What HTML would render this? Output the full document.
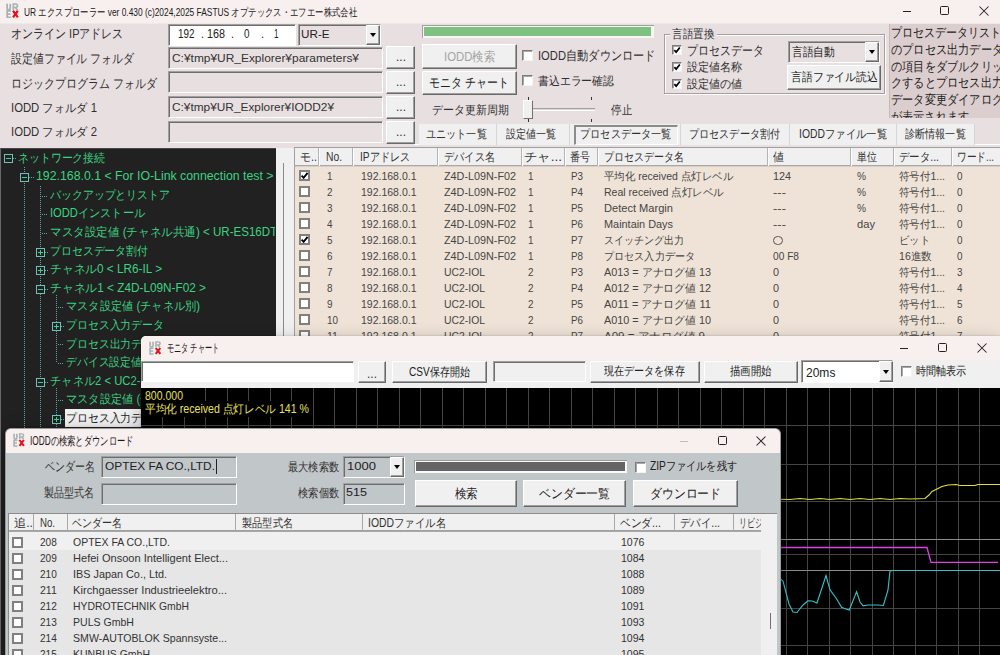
<!DOCTYPE html>
<html><head><meta charset="utf-8">
<style>
*{box-sizing:border-box;margin:0;padding:0}
html,body{width:1000px;height:655px;overflow:hidden}
body{position:relative;background:#e8dfe0;font-family:"Liberation Sans",sans-serif;font-size:12px;color:#303030}
.r{position:absolute}
.t{position:absolute;white-space:nowrap;transform-origin:0 50%}
.clip{position:absolute;overflow:hidden}
</style></head><body>

<div class="r" style="left:0px;top:0px;width:1000px;height:23px;background:#f8efef"></div>
<div class="r" style="left:0px;top:23px;width:1000px;height:1px;background:#f0e7e7"></div>
<svg class="r" style="left:6px;top:2.5px" width="12.5" height="15.5" viewBox="0 0 13 16" preserveAspectRatio="none">
<path d="M1.2 0.8V5.2Q1.2 7 2.8 7Q4.4 7 4.4 5.2V0.8" fill="none" stroke="#a6b2b3" stroke-width="1.8"></path>
<path d="M7.6 7.2V1H10Q12 1 12 2.9Q12 4.6 10 4.6H7.6M9.8 4.6L12 7.2" fill="none" stroke="#a6b2b3" stroke-width="1.7"></path>
<path d="M5 8.2H1.2V14.8H5M1.2 11.5H4.6" fill="none" stroke="#a6b2b3" stroke-width="1.8"></path>
<path d="M7.3 8L12.3 14.8M12.3 8L7.3 14.8" fill="none" stroke="#e8101a" stroke-width="2.3"></path>
</svg>
<div class="t" style="left: 24px; top: 4.5px; font-size: 11px; line-height: 14px; color: rgb(26, 26, 26); transform: scaleX(0.7609);">UR エクスプローラー ver 0.430 (c)2024,2025 FASTUS オプテックス・エフエー株式会社</div>
<div class="r" style="left:903px;top:11px;width:8px;height:1px;background:#222"></div>
<div class="r" style="left:940px;top:6px;width:9px;height:9px;border:1px solid #222;border-radius:1.5px"></div>
<svg class="r" style="left:979px;top:6px" width="10" height="10"><path d="M0.5 0.5L9.5 9.5M9.5 0.5L0.5 9.5" stroke="#222" stroke-width="1.05"></path></svg>
<div class="t" style="left: 10.5px; top: 25px; font-size: 13px; line-height: 17px; transform: scaleX(0.8465);">オンライン IPアドレス</div>
<div class="t" style="left: 10.5px; top: 49.5px; font-size: 13px; line-height: 17px; transform: scaleX(0.8389);">設定値ファイル フォルダ</div>
<div class="t" style="left: 10.5px; top: 74.5px; font-size: 13px; line-height: 17px; transform: scaleX(0.8458);">ロジックプログラム フォルダ</div>
<div class="t" style="left: 10.5px; top: 99.5px; font-size: 12px; line-height: 16px; transform: scaleX(0.9415);">IODD フォルダ 1</div>
<div class="t" style="left: 10.5px; top: 124px; font-size: 12px; line-height: 16px; transform: scaleX(0.9415);">IODD フォルダ 2</div>
<div class="r" style="left:168px;top:24px;width:128px;height:22px;background:#fff;border-top:1px solid #a0a0a0;border-left:1px solid #a0a0a0;border-bottom:1px solid #fff;border-right:1px solid #fff;box-shadow:inset 1px 1px 0 #6e6e6e"></div>
<div class="t" style="left: 177.5px; top: 26px; font-size: 12px; line-height: 16px; color: rgb(34, 34, 34); transform: scaleX(0.8237);">192</div>
<div class="t" style="left: 201px; top: 26px; font-size: 12px; line-height: 16px; color: rgb(34, 34, 34); transform: scaleX(0.8972);">.</div>
<div class="t" style="left: 207px; top: 26px; font-size: 12px; line-height: 16px; color: rgb(34, 34, 34); transform: scaleX(0.8986);">168</div>
<div class="t" style="left: 231px; top: 26px; font-size: 12px; line-height: 16px; color: rgb(34, 34, 34); transform: scaleX(0.8972);">.</div>
<div class="t" style="left: 243.5px; top: 26px; font-size: 12px; line-height: 16px; color: rgb(34, 34, 34); transform: scaleX(0.8224);">0</div>
<div class="t" style="left: 260.5px; top: 26px; font-size: 12px; line-height: 16px; color: rgb(34, 34, 34); transform: scaleX(0.8972);">.</div>
<div class="t" style="left: 274px; top: 26px; font-size: 12px; line-height: 16px; color: rgb(34, 34, 34); transform: scaleX(0.6729);">1</div>
<div class="r" style="left:298px;top:24px;width:83px;height:22px;background:#e8dfe0;border-top:1px solid #a0a0a0;border-left:1px solid #a0a0a0;border-bottom:1px solid #fff;border-right:1px solid #fff;box-shadow:inset 1px 1px 0 #6e6e6e"></div>
<div class="t" style="left: 300.5px; top: 27px; font-size: 11.5px; line-height: 15px; color: rgb(34, 34, 34); transform: scaleX(1.0169);">UR-E</div>
<div class="r" style="left:366px;top:25px;width:14px;height:20px;background:#f0f0f0;border-top:1px solid #fff;border-left:1px solid #fff;border-right:1px solid #696969;border-bottom:1px solid #696969;box-shadow:inset -1px -1px 0 #a0a0a0"></div>
<div class="r" style="left:369.5px;top:33.0px;width:0;height:0;border-left:3.5px solid transparent;border-right:3.5px solid transparent;border-top:4px solid #000"></div>
<div class="r" style="left:168px;top:47px;width:215px;height:22px;background:#e8dfe0;border-top:1px solid #a0a0a0;border-left:1px solid #a0a0a0;border-bottom:1px solid #fff;border-right:1px solid #fff;box-shadow:inset 1px 1px 0 #6e6e6e"></div>
<div class="t" style="left: 172px; top: 51px; font-size: 11px; line-height: 14px; color: rgb(51, 51, 51); transform: scaleX(1.0845);">C:¥tmp¥UR_Explorer¥parameters¥</div>
<div class="r" style="left:168px;top:71px;width:215px;height:22px;background:#e8dfe0;border-top:1px solid #a0a0a0;border-left:1px solid #a0a0a0;border-bottom:1px solid #fff;border-right:1px solid #fff;box-shadow:inset 1px 1px 0 #6e6e6e"></div>
<div class="r" style="left:168px;top:96px;width:215px;height:22px;background:#e8dfe0;border-top:1px solid #a0a0a0;border-left:1px solid #a0a0a0;border-bottom:1px solid #fff;border-right:1px solid #fff;box-shadow:inset 1px 1px 0 #6e6e6e"></div>
<div class="t" style="left: 172px; top: 100px; font-size: 11px; line-height: 14px; color: rgb(51, 51, 51); transform: scaleX(1.0772);">C:¥tmp¥UR_Explorer¥IODD2¥</div>
<div class="r" style="left:168px;top:121px;width:215px;height:22px;background:#e8dfe0;border-top:1px solid #a0a0a0;border-left:1px solid #a0a0a0;border-bottom:1px solid #fff;border-right:1px solid #fff;box-shadow:inset 1px 1px 0 #6e6e6e"></div>
<div class="r" style="left:386px;top:46px;width:29px;height:23px;background:#f0f0f0;border-top:1px solid #fff;border-left:1px solid #fff;border-right:1px solid #696969;border-bottom:1px solid #696969;box-shadow:inset -1px -1px 0 #a0a0a0"></div>
<div class="t" style="left: 395.5px; top: 49px; font-size: 12px; line-height: 16px; color: rgb(51, 51, 51); transform: scaleX(0.9984);">...</div>
<div class="r" style="left:386px;top:71px;width:29px;height:23px;background:#f0f0f0;border-top:1px solid #fff;border-left:1px solid #fff;border-right:1px solid #696969;border-bottom:1px solid #696969;box-shadow:inset -1px -1px 0 #a0a0a0"></div>
<div class="t" style="left: 395.5px; top: 74px; font-size: 12px; line-height: 16px; color: rgb(51, 51, 51); transform: scaleX(0.9984);">...</div>
<div class="r" style="left:386px;top:96px;width:29px;height:23px;background:#f0f0f0;border-top:1px solid #fff;border-left:1px solid #fff;border-right:1px solid #696969;border-bottom:1px solid #696969;box-shadow:inset -1px -1px 0 #a0a0a0"></div>
<div class="t" style="left: 395.5px; top: 99px; font-size: 12px; line-height: 16px; color: rgb(51, 51, 51); transform: scaleX(0.9984);">...</div>
<div class="r" style="left:386px;top:121px;width:29px;height:23px;background:#f0f0f0;border-top:1px solid #fff;border-left:1px solid #fff;border-right:1px solid #696969;border-bottom:1px solid #696969;box-shadow:inset -1px -1px 0 #a0a0a0"></div>
<div class="t" style="left: 395.5px; top: 124px; font-size: 12px; line-height: 16px; color: rgb(51, 51, 51); transform: scaleX(0.9984);">...</div>
<div class="r" style="left:422px;top:25px;width:232px;height:13px;background:#faf6f6;border-top:1px solid #a0a0a0;border-left:1px solid #a0a0a0"></div>
<div class="r" style="left:424px;top:27px;width:227px;height:9px;background:#7ec282"></div>
<div class="r" style="left:422px;top:44px;width:95px;height:25px;background:#f0f0f0;border-top:1px solid #fff;border-left:1px solid #fff;border-right:1px solid #696969;border-bottom:1px solid #696969;box-shadow:inset -1px -1px 0 #a0a0a0"></div>
<div class="t" style="left: 443.5px; top: 47.5px; font-size: 13px; line-height: 17px; color: rgb(164, 164, 164); transform: scaleX(0.8718);">IODD検索</div>
<div class="r" style="left:422px;top:71px;width:95px;height:24px;background:#f0f0f0;border-top:1px solid #fff;border-left:1px solid #fff;border-right:1px solid #696969;border-bottom:1px solid #696969;box-shadow:inset -1px -1px 0 #a0a0a0"></div>
<div class="t" style="left: 429px; top: 73.5px; font-size: 13px; line-height: 17px; color: rgb(34, 34, 34); transform: scaleX(0.8423);">モニタ チャート</div>
<div class="r" style="left:522px;top:50px;width:11px;height:11px;background:#fff;border-top:1px solid #7c7c7c;border-left:1px solid #7c7c7c;border-bottom:1px solid #f4f4f4;border-right:1px solid #f4f4f4;box-shadow:inset 1px 1px 0 #a8a8a8"></div>
<div class="t" style="left: 537.5px; top: 47.1px; font-size: 13px; line-height: 17px; transform: scaleX(0.8608);">IODD自動ダウンロード</div>
<div class="r" style="left:522px;top:75px;width:11px;height:11px;background:#fff;border-top:1px solid #7c7c7c;border-left:1px solid #7c7c7c;border-bottom:1px solid #f4f4f4;border-right:1px solid #f4f4f4;box-shadow:inset 1px 1px 0 #a8a8a8"></div>
<div class="t" style="left: 537.5px; top: 72.5px; font-size: 12px; line-height: 16px; transform: scaleX(0.9048);">書込エラー確認</div>
<div class="t" style="left: 432px; top: 101.6px; font-size: 12px; line-height: 16px; transform: scaleX(0.9131);">データ更新周期</div>
<div class="t" style="left: 611px; top: 101.6px; font-size: 12px; line-height: 16px; transform: scaleX(0.875);">停止</div>
<div class="r" style="left:532px;top:108px;width:63px;height:3px;border-top:1px solid #a0a0a0;border-bottom:1px solid #fff;background:#e0d8d8"></div>
<div class="r" style="left:523px;top:100px;width:10px;height:19px;background:#f0f0f0;border-top:1px solid #fff;border-left:1px solid #fff;border-right:1px solid #707070;border-bottom:1px solid #707070"></div>
<div class="r" style="left:528px;top:97px;width:1px;height:3px;background:#333"></div>
<div class="r" style="left:528px;top:119px;width:1px;height:3px;background:#333"></div>
<div class="r" style="left:591px;top:97px;width:1px;height:3px;background:#333"></div>
<div class="r" style="left:591px;top:119px;width:1px;height:3px;background:#333"></div>
<div class="r" style="left:664px;top:34px;width:221px;height:60px;border:1px solid #a89e9e;box-shadow:inset 1px 1px 0 #fff,1px 1px 0 #fff"></div>
<div class="r" style="left:670px;top:26px;width:47px;height:14px;background:#e8dfe0"></div>
<div class="t" style="left: 672px; top: 25.6px; font-size: 12px; line-height: 16px; transform: scaleX(0.8833);">言語置換</div>
<div class="r" style="left:672px;top:45px;width:10px;height:10px;background:#fff;border-top:1px solid #7c7c7c;border-left:1px solid #7c7c7c;border-bottom:1px solid #f4f4f4;border-right:1px solid #f4f4f4;box-shadow:inset 1px 1px 0 #a8a8a8"></div>
<svg class="r" style="left:672px;top:45px" width="10" height="10" viewBox="0 0 11 11"><path d="M2.6 5.6L4.6 7.8L8.6 2.8" fill="none" stroke="#000" stroke-width="1.9"></path></svg>
<div class="t" style="left: 687px; top: 41.5px; font-size: 13px; line-height: 17px; transform: scaleX(0.8407);">プロセスデータ</div>
<div class="r" style="left:672px;top:62px;width:10px;height:10px;background:#fff;border-top:1px solid #7c7c7c;border-left:1px solid #7c7c7c;border-bottom:1px solid #f4f4f4;border-right:1px solid #f4f4f4;box-shadow:inset 1px 1px 0 #a8a8a8"></div>
<svg class="r" style="left:672px;top:62px" width="10" height="10" viewBox="0 0 11 11"><path d="M2.6 5.6L4.6 7.8L8.6 2.8" fill="none" stroke="#000" stroke-width="1.9"></path></svg>
<div class="t" style="left: 687px; top: 59px; font-size: 12px; line-height: 16px; transform: scaleX(0.9267);">設定値名称</div>
<div class="r" style="left:672px;top:79px;width:10px;height:10px;background:#fff;border-top:1px solid #7c7c7c;border-left:1px solid #7c7c7c;border-bottom:1px solid #f4f4f4;border-right:1px solid #f4f4f4;box-shadow:inset 1px 1px 0 #a8a8a8"></div>
<svg class="r" style="left:672px;top:79px" width="10" height="10" viewBox="0 0 11 11"><path d="M2.6 5.6L4.6 7.8L8.6 2.8" fill="none" stroke="#000" stroke-width="1.9"></path></svg>
<div class="t" style="left: 687px; top: 75.6px; font-size: 12px; line-height: 16px; transform: scaleX(0.9267);">設定値の値</div>
<div class="r" style="left:788px;top:41px;width:92px;height:22px;background:#e8dfe0;border-top:1px solid #a0a0a0;border-left:1px solid #a0a0a0;border-bottom:1px solid #fff;border-right:1px solid #fff;box-shadow:inset 1px 1px 0 #6e6e6e"></div>
<div class="t" style="left: 792px; top: 44.3px; font-size: 12px; line-height: 16px; color: rgb(34, 34, 34); transform: scaleX(0.8958);">言語自動</div>
<div class="r" style="left:865px;top:42px;width:14px;height:20px;background:#f0f0f0;border-top:1px solid #fff;border-left:1px solid #fff;border-right:1px solid #696969;border-bottom:1px solid #696969;box-shadow:inset -1px -1px 0 #a0a0a0"></div>
<div class="r" style="left:868.5px;top:50.0px;width:0;height:0;border-left:3.5px solid transparent;border-right:3.5px solid transparent;border-top:4px solid #000"></div>
<div class="r" style="left:787px;top:65px;width:94px;height:25px;background:#f0f0f0;border-top:1px solid #fff;border-left:1px solid #fff;border-right:1px solid #696969;border-bottom:1px solid #696969;box-shadow:inset -1px -1px 0 #a0a0a0"></div>
<div class="t" style="left: 791px; top: 69px; font-size: 12px; line-height: 16px; color: rgb(34, 34, 34); transform: scaleX(0.9031);">言語ファイル読込</div>
<div class="clip" style="left:889px;top:24px;width:111px;height:94px;background:#dccece;border-left:1px solid #c8b8b8">
<div class="t" style="left: 1px; top: -0.3px; font-size: 13px; line-height: 17px; color: rgb(34, 34, 34); transform: scaleX(0.8462);">プロセスデータリスト</div>
<div class="t" style="left: 1px; top: 16.6px; font-size: 13px; line-height: 17px; color: rgb(34, 34, 34); transform: scaleX(0.8615);">のプロセス出力データ</div>
<div class="t" style="left: 1px; top: 33.5px; font-size: 13px; line-height: 17px; color: rgb(34, 34, 34); transform: scaleX(0.8615);">の項目をダブルクリッ</div>
<div class="t" style="left: 1px; top: 50.4px; font-size: 13px; line-height: 17px; color: rgb(34, 34, 34); transform: scaleX(0.8615);">クするとプロセス出力</div>
<div class="t" style="left: 1px; top: 67.3px; font-size: 13px; line-height: 17px; color: rgb(34, 34, 34); transform: scaleX(0.8615);">データ変更ダイアログ</div>
<div class="t" style="left: 1px; top: 84.2px; font-size: 13px; line-height: 17px; color: rgb(34, 34, 34); transform: scaleX(0.8571);">が表示されます</div>
</div>
<div class="r" style="left:414px;top:144px;width:586px;height:1px;background:#fff"></div>
<div class="r" style="left:419px;top:124px;width:555px;height:21px;background:#f0f0f0"></div>
<div class="r" style="left:496px;top:124px;width:1px;height:21px;background:#d6d6d6"></div>
<div class="r" style="left:569px;top:124px;width:1px;height:21px;background:#d6d6d6"></div>
<div class="r" style="left:680px;top:124px;width:1px;height:21px;background:#d6d6d6"></div>
<div class="r" style="left:789px;top:124px;width:1px;height:21px;background:#d6d6d6"></div>
<div class="r" style="left:896px;top:124px;width:1px;height:21px;background:#d6d6d6"></div>
<div class="r" style="left:974px;top:124px;width:1px;height:21px;background:#d6d6d6"></div>
<div class="r" style="left:574px;top:125px;width:104px;height:20px;border-top:2px solid #8c8c8c;border-left:2px solid #8c8c8c;border-bottom:1px solid #fff;border-right:1px solid #fff"></div>
<div class="t" style="left: 426.4px; top: 125.5px; font-size: 12px; line-height: 16px; transform: scaleX(0.8417);">ユニット一覧</div>
<div class="t" style="left: 505.7px; top: 125.5px; font-size: 12px; line-height: 16px; transform: scaleX(0.8417);">設定値一覧</div>
<div class="t" style="left: 580px; top: 125.5px; font-size: 12px; line-height: 16px; transform: scaleX(0.8481);">プロセスデータ一覧</div>
<div class="t" style="left: 689px; top: 125.5px; font-size: 12px; line-height: 16px; transform: scaleX(0.8426);">プロセスデータ割付</div>
<div class="t" style="left: 798.7px; top: 125.5px; font-size: 12px; line-height: 16px; transform: scaleX(0.8627);">IODDファイル一覧</div>
<div class="t" style="left: 905.3px; top: 125.5px; font-size: 12px; line-height: 16px; transform: scaleX(0.8431);">診断情報一覧</div>
<div class="r" style="left:0px;top:148px;width:276px;height:507px;background:#212121;border-top:1px solid #484848;border-left:1px solid #6a6a6a"></div>
<div class="r" style="left:276px;top:148px;width:18px;height:507px;background:#f0f0f0"></div>
<div class="r" style="left:283px;top:163px;width:1px;height:492px;background:#8a8a8a"></div>
<div class="r" style="left:24px;top:167px;width:1px;height:488px;background:repeating-linear-gradient(to bottom,#58a8a8 0 1px,transparent 1px 2px)"></div>
<div class="r" style="left:40px;top:186px;width:1px;height:469px;background:repeating-linear-gradient(to bottom,#58a8a8 0 1px,transparent 1px 2px)"></div>
<div class="r" style="left:56px;top:295px;width:1px;height:68px;background:repeating-linear-gradient(to bottom,#58a8a8 0 1px,transparent 1px 2px)"></div>
<div class="r" style="left:56px;top:388px;width:1px;height:267px;background:repeating-linear-gradient(to bottom,#58a8a8 0 1px,transparent 1px 2px)"></div>
<div class="clip" style="left:1px;top:148px;width:274px;height:507px">
<div class="r" style="left:3px;top:6px;width:9px;height:9px;border:1px solid #70c0c0;background:#212121"></div>
<div class="r" style="left:5px;top:10px;width:5px;height:1px;background:#3cd282"></div>
<div class="r" style="left:12px;top:10px;width:2.5px;height:1px;background:repeating-linear-gradient(to right,#58a8a8 0 1px,transparent 1px 2px)"></div>
<div class="t" style="left: 16.5px; top: 1.5px; font-size: 12px; line-height: 16px; color: rgb(60, 210, 130); transform: scaleX(0.9063);">ネットワーク接続</div>
<div class="r" style="left:19px;top:25px;width:9px;height:9px;border:1px solid #70c0c0;background:#212121"></div>
<div class="r" style="left:21px;top:29px;width:5px;height:1px;background:#3cd282"></div>
<div class="r" style="left:28px;top:29px;width:4.5px;height:1px;background:repeating-linear-gradient(to right,#58a8a8 0 1px,transparent 1px 2px)"></div>
<div class="t" style="left: 34.5px; top: 20.1px; font-size: 12px; line-height: 16px; color: rgb(60, 210, 130); transform: scaleX(1.026);">192.168.0.1 &lt; For IO-Link connection test &gt;</div>
<div class="r" style="left:41px;top:48px;width:6px;height:1px;background:repeating-linear-gradient(to right,#58a8a8 0 1px,transparent 1px 2px)"></div>
<div class="t" style="left: 49px; top: 38.7px; font-size: 12px; line-height: 16px; color: rgb(60, 210, 130); transform: scaleX(0.9091);">バックアップとリストア</div>
<div class="r" style="left:41px;top:66px;width:6px;height:1px;background:repeating-linear-gradient(to right,#58a8a8 0 1px,transparent 1px 2px)"></div>
<div class="t" style="left: 49px; top: 57.3px; font-size: 12px; line-height: 16px; color: rgb(60, 210, 130); transform: scaleX(0.9314);">IODDインストール</div>
<div class="r" style="left:41px;top:85px;width:6px;height:1px;background:repeating-linear-gradient(to right,#58a8a8 0 1px,transparent 1px 2px)"></div>
<div class="t" style="left: 49px; top: 75.9px; font-size: 12px; line-height: 16px; color: rgb(60, 210, 130); transform: scaleX(0.9641);">マスタ設定値 (チャネル共通) &lt; UR-ES16DT &gt;</div>
<div class="r" style="left:35px;top:100px;width:9px;height:9px;border:1px solid #70c0c0;background:#212121"></div>
<div class="r" style="left:37px;top:104px;width:5px;height:1px;background:#3cd282"></div>
<div class="r" style="left:39px;top:102px;width:1px;height:5px;background:#3cd282"></div>
<div class="r" style="left:44px;top:104px;width:3px;height:1px;background:repeating-linear-gradient(to right,#58a8a8 0 1px,transparent 1px 2px)"></div>
<div class="t" style="left: 49px; top: 94.5px; font-size: 12px; line-height: 16px; color: rgb(60, 210, 130); transform: scaleX(0.9074);">プロセスデータ割付</div>
<div class="r" style="left:35px;top:118px;width:9px;height:9px;border:1px solid #70c0c0;background:#212121"></div>
<div class="r" style="left:37px;top:122px;width:5px;height:1px;background:#3cd282"></div>
<div class="r" style="left:39px;top:120px;width:1px;height:5px;background:#3cd282"></div>
<div class="r" style="left:44px;top:122px;width:3px;height:1px;background:repeating-linear-gradient(to right,#58a8a8 0 1px,transparent 1px 2px)"></div>
<div class="t" style="left: 49px; top: 113.1px; font-size: 12px; line-height: 16px; color: rgb(60, 210, 130); transform: scaleX(0.9802);">チャネル0 &lt; LR6-IL &gt;</div>
<div class="r" style="left:35px;top:137px;width:9px;height:9px;border:1px solid #70c0c0;background:#212121"></div>
<div class="r" style="left:37px;top:141px;width:5px;height:1px;background:#3cd282"></div>
<div class="r" style="left:44px;top:141px;width:3px;height:1px;background:repeating-linear-gradient(to right,#58a8a8 0 1px,transparent 1px 2px)"></div>
<div class="t" style="left: 49px; top: 131.7px; font-size: 12px; line-height: 16px; color: rgb(60, 210, 130); transform: scaleX(0.9829);">チャネル1 &lt; Z4D-L09N-F02 &gt;</div>
<div class="r" style="left:57px;top:159px;width:6px;height:1px;background:repeating-linear-gradient(to right,#58a8a8 0 1px,transparent 1px 2px)"></div>
<div class="t" style="left: 65px; top: 150.3px; font-size: 12px; line-height: 16px; color: rgb(60, 210, 130); transform: scaleX(0.9349);">マスタ設定値 (チャネル別)</div>
<div class="r" style="left:51px;top:174px;width:9px;height:9px;border:1px solid #70c0c0;background:#212121"></div>
<div class="r" style="left:53px;top:178px;width:5px;height:1px;background:#3cd282"></div>
<div class="r" style="left:55px;top:176px;width:1px;height:5px;background:#3cd282"></div>
<div class="r" style="left:60px;top:178px;width:3px;height:1px;background:repeating-linear-gradient(to right,#58a8a8 0 1px,transparent 1px 2px)"></div>
<div class="t" style="left: 65px; top: 168.9px; font-size: 12px; line-height: 16px; color: rgb(60, 210, 130); transform: scaleX(0.9074);">プロセス入力データ</div>
<div class="r" style="left:57px;top:196px;width:6px;height:1px;background:repeating-linear-gradient(to right,#58a8a8 0 1px,transparent 1px 2px)"></div>
<div class="t" style="left: 65px; top: 187.5px; font-size: 12px; line-height: 16px; color: rgb(60, 210, 130); transform: scaleX(0.9074);">プロセス出力データ</div>
<div class="r" style="left:57px;top:215px;width:6px;height:1px;background:repeating-linear-gradient(to right,#58a8a8 0 1px,transparent 1px 2px)"></div>
<div class="t" style="left: 65px; top: 206.1px; font-size: 12px; line-height: 16px; color: rgb(60, 210, 130); transform: scaleX(0.9048);">デバイス設定値</div>
<div class="r" style="left:35px;top:230px;width:9px;height:9px;border:1px solid #70c0c0;background:#212121"></div>
<div class="r" style="left:37px;top:234px;width:5px;height:1px;background:#3cd282"></div>
<div class="r" style="left:44px;top:234px;width:3px;height:1px;background:repeating-linear-gradient(to right,#58a8a8 0 1px,transparent 1px 2px)"></div>
<div class="t" style="left: 49px; top: 224.7px; font-size: 12px; line-height: 16px; color: rgb(60, 210, 130); transform: scaleX(0.9395);">チャネル2 &lt; UC2-IOL &gt;</div>
<div class="r" style="left:57px;top:252px;width:6px;height:1px;background:repeating-linear-gradient(to right,#58a8a8 0 1px,transparent 1px 2px)"></div>
<div class="t" style="left: 65px; top: 243.3px; font-size: 12px; line-height: 16px; color: rgb(60, 210, 130); transform: scaleX(0.9349);">マスタ設定値 (チャネル別)</div>
<div class="r" style="left:51px;top:267px;width:9px;height:9px;border:1px solid #70c0c0;background:#212121"></div>
<div class="r" style="left:53px;top:271px;width:5px;height:1px;background:#3cd282"></div>
<div class="r" style="left:55px;top:269px;width:1px;height:5px;background:#3cd282"></div>
<div class="r" style="left:60px;top:271px;width:3px;height:1px;background:repeating-linear-gradient(to right,#58a8a8 0 1px,transparent 1px 2px)"></div>
<div class="r" style="left:64px;top:261.40000000000003px;width:80px;height:18px;background:#f0f0f0"></div>
<div class="t" style="left: 65px; top: 261.9px; font-size: 12px; line-height: 16px; color: rgb(34, 34, 34); transform: scaleX(0.9074);">プロセス入力データ</div>
<div class="r" style="left:57px;top:290px;width:6px;height:1px;background:repeating-linear-gradient(to right,#58a8a8 0 1px,transparent 1px 2px)"></div>
<div class="t" style="left: 65px; top: 280.5px; font-size: 12px; line-height: 16px; color: rgb(60, 210, 130); transform: scaleX(0.9074);">プロセス出力データ</div>
</div>
<div class="r" style="left:294px;top:147px;width:706px;height:189px;background:#efe3d7;border-top:1px solid #a0a0a0;border-left:1px solid #a0a0a0"></div>
<div class="r" style="left:295px;top:148px;width:705px;height:18px;background:#f0f0f0;border-bottom:1px solid #a8a8a8"></div>
<div class="r" style="left:295px;top:166px;width:705px;height:1px;background:#d8d0c8"></div>
<div class="r" style="left:318px;top:148px;width:1px;height:18px;background:#b4b4b4"></div>
<div class="r" style="left:319px;top:148px;width:1px;height:18px;background:#fff"></div>
<div class="r" style="left:352px;top:148px;width:1px;height:18px;background:#b4b4b4"></div>
<div class="r" style="left:353px;top:148px;width:1px;height:18px;background:#fff"></div>
<div class="r" style="left:437px;top:148px;width:1px;height:18px;background:#b4b4b4"></div>
<div class="r" style="left:438px;top:148px;width:1px;height:18px;background:#fff"></div>
<div class="r" style="left:521px;top:148px;width:1px;height:18px;background:#b4b4b4"></div>
<div class="r" style="left:522px;top:148px;width:1px;height:18px;background:#fff"></div>
<div class="r" style="left:564px;top:148px;width:1px;height:18px;background:#b4b4b4"></div>
<div class="r" style="left:565px;top:148px;width:1px;height:18px;background:#fff"></div>
<div class="r" style="left:597px;top:148px;width:1px;height:18px;background:#b4b4b4"></div>
<div class="r" style="left:598px;top:148px;width:1px;height:18px;background:#fff"></div>
<div class="r" style="left:767px;top:148px;width:1px;height:18px;background:#b4b4b4"></div>
<div class="r" style="left:768px;top:148px;width:1px;height:18px;background:#fff"></div>
<div class="r" style="left:850px;top:148px;width:1px;height:18px;background:#b4b4b4"></div>
<div class="r" style="left:851px;top:148px;width:1px;height:18px;background:#fff"></div>
<div class="r" style="left:893px;top:148px;width:1px;height:18px;background:#b4b4b4"></div>
<div class="r" style="left:894px;top:148px;width:1px;height:18px;background:#fff"></div>
<div class="r" style="left:951px;top:148px;width:1px;height:18px;background:#b4b4b4"></div>
<div class="r" style="left:952px;top:148px;width:1px;height:18px;background:#fff"></div>
<div class="t" style="left: 299.8px; top: 149px; font-size: 12px; line-height: 16px; color: rgb(51, 51, 51); transform: scaleX(0.9105);">モ..</div>
<div class="t" style="left: 326px; top: 149px; font-size: 12px; line-height: 16px; color: rgb(51, 51, 51); transform: scaleX(0.8562);">No.</div>
<div class="t" style="left: 360px; top: 149px; font-size: 12px; line-height: 16px; color: rgb(51, 51, 51); transform: scaleX(0.8425);">IPアドレス</div>
<div class="t" style="left: 443.8px; top: 149px; font-size: 12px; line-height: 16px; color: rgb(51, 51, 51); transform: scaleX(0.85);">デバイス名</div>
<div class="t" style="left: 524px; top: 149px; font-size: 12px; line-height: 16px; color: rgb(51, 51, 51); transform: scaleX(1.1171);">チャ...</div>
<div class="t" style="left: 569.8px; top: 149px; font-size: 12px; line-height: 16px; color: rgb(51, 51, 51); transform: scaleX(0.8333);">番号</div>
<div class="t" style="left: 604px; top: 149px; font-size: 12px; line-height: 16px; color: rgb(51, 51, 51); transform: scaleX(0.8333);">プロセスデータ名</div>
<div class="t" style="left: 773px; top: 149px; font-size: 12px; line-height: 16px; color: rgb(51, 51, 51); transform: scaleX(0.9167);">値</div>
<div class="t" style="left: 857px; top: 149px; font-size: 12px; line-height: 16px; color: rgb(51, 51, 51); transform: scaleX(0.8333);">単位</div>
<div class="t" style="left: 899px; top: 149px; font-size: 12px; line-height: 16px; color: rgb(51, 51, 51); transform: scaleX(0.8693);">データ...</div>
<div class="t" style="left: 957px; top: 149px; font-size: 12px; line-height: 16px; color: rgb(51, 51, 51); transform: scaleX(0.8041);">ワード...</div>
<div class="r" style="left:299px;top:170px;width:11px;height:11px;background:#fff;border:2px solid #808080"></div>
<svg class="r" style="left:299px;top:170px" width="11" height="11" viewBox="0 0 11 11"><path d="M2.6 5.6L4.6 7.8L8.6 2.8" fill="none" stroke="#000" stroke-width="1.9"></path></svg>
<div class="t" style="left: 327px; top: 169px; font-size: 11px; line-height: 14px; color: rgb(69, 69, 69); transform: scaleX(0.898);">1</div>
<div class="t" style="left: 360.5px; top: 169px; font-size: 11px; line-height: 14px; color: rgb(69, 69, 69); transform: scaleX(0.9548);">192.168.0.1</div>
<div class="t" style="left: 443.8px; top: 169px; font-size: 11px; line-height: 14px; color: rgb(69, 69, 69); transform: scaleX(0.9815);">Z4D-L09N-F02</div>
<div class="t" style="left: 528.4px; top: 169px; font-size: 11px; line-height: 14px; color: rgb(69, 69, 69); transform: scaleX(0.898);">1</div>
<div class="t" style="left: 570.5px; top: 169px; font-size: 11px; line-height: 14px; color: rgb(69, 69, 69); transform: scaleX(0.891);">P3</div>
<div class="t" style="left: 604px; top: 169px; font-size: 11px; line-height: 14px; color: rgb(69, 69, 69); transform: scaleX(0.9506);">平均化 received 点灯レベル</div>
<div class="t" style="left: 773px; top: 169px; font-size: 11px; line-height: 14px; color: rgb(69, 69, 69); transform: scaleX(0.9804);">124</div>
<div class="t" style="left: 857px; top: 169px; font-size: 11px; line-height: 14px; color: rgb(69, 69, 69); transform: scaleX(0.9201);">%</div>
<div class="t" style="left: 899px; top: 169px; font-size: 11px; line-height: 14px; color: rgb(69, 69, 69); transform: scaleX(0.9524);">符号付1...</div>
<div class="t" style="left: 957px; top: 169px; font-size: 11px; line-height: 14px; color: rgb(69, 69, 69); transform: scaleX(0.898);">0</div>
<div class="r" style="left:299px;top:186px;width:11px;height:11px;background:#fff;border:2px solid #808080"></div>
<div class="t" style="left: 327px; top: 185px; font-size: 11px; line-height: 14px; color: rgb(69, 69, 69); transform: scaleX(0.898);">2</div>
<div class="t" style="left: 360.5px; top: 185px; font-size: 11px; line-height: 14px; color: rgb(69, 69, 69); transform: scaleX(0.9548);">192.168.0.1</div>
<div class="t" style="left: 443.8px; top: 185px; font-size: 11px; line-height: 14px; color: rgb(69, 69, 69); transform: scaleX(0.9815);">Z4D-L09N-F02</div>
<div class="t" style="left: 528.4px; top: 185px; font-size: 11px; line-height: 14px; color: rgb(69, 69, 69); transform: scaleX(0.898);">1</div>
<div class="t" style="left: 570.5px; top: 185px; font-size: 11px; line-height: 14px; color: rgb(69, 69, 69); transform: scaleX(0.891);">P4</div>
<div class="t" style="left: 604px; top: 185px; font-size: 11px; line-height: 14px; color: rgb(69, 69, 69); transform: scaleX(0.9575);">Real received 点灯レベル</div>
<div class="t" style="left: 773px; top: 185px; font-size: 11px; line-height: 14px; color: rgb(69, 69, 69); transform: scaleX(1.1818);">---</div>
<div class="t" style="left: 857px; top: 185px; font-size: 11px; line-height: 14px; color: rgb(69, 69, 69); transform: scaleX(0.9201);">%</div>
<div class="t" style="left: 899px; top: 185px; font-size: 11px; line-height: 14px; color: rgb(69, 69, 69); transform: scaleX(0.9524);">符号付1...</div>
<div class="t" style="left: 957px; top: 185px; font-size: 11px; line-height: 14px; color: rgb(69, 69, 69); transform: scaleX(0.898);">0</div>
<div class="r" style="left:299px;top:202px;width:11px;height:11px;background:#fff;border:2px solid #808080"></div>
<div class="t" style="left: 327px; top: 201px; font-size: 11px; line-height: 14px; color: rgb(69, 69, 69); transform: scaleX(0.898);">3</div>
<div class="t" style="left: 360.5px; top: 201px; font-size: 11px; line-height: 14px; color: rgb(69, 69, 69); transform: scaleX(0.9548);">192.168.0.1</div>
<div class="t" style="left: 443.8px; top: 201px; font-size: 11px; line-height: 14px; color: rgb(69, 69, 69); transform: scaleX(0.9815);">Z4D-L09N-F02</div>
<div class="t" style="left: 528.4px; top: 201px; font-size: 11px; line-height: 14px; color: rgb(69, 69, 69); transform: scaleX(0.898);">1</div>
<div class="t" style="left: 570.5px; top: 201px; font-size: 11px; line-height: 14px; color: rgb(69, 69, 69); transform: scaleX(0.891);">P5</div>
<div class="t" style="left: 604px; top: 201px; font-size: 11px; line-height: 14px; color: rgb(69, 69, 69); transform: scaleX(1.0075);">Detect Margin</div>
<div class="t" style="left: 773px; top: 201px; font-size: 11px; line-height: 14px; color: rgb(69, 69, 69); transform: scaleX(1.1818);">---</div>
<div class="t" style="left: 857px; top: 201px; font-size: 11px; line-height: 14px; color: rgb(69, 69, 69); transform: scaleX(0.9201);">%</div>
<div class="t" style="left: 899px; top: 201px; font-size: 11px; line-height: 14px; color: rgb(69, 69, 69); transform: scaleX(0.9524);">符号付1...</div>
<div class="t" style="left: 957px; top: 201px; font-size: 11px; line-height: 14px; color: rgb(69, 69, 69); transform: scaleX(0.898);">0</div>
<div class="r" style="left:299px;top:218px;width:11px;height:11px;background:#fff;border:2px solid #808080"></div>
<div class="t" style="left: 327px; top: 217px; font-size: 11px; line-height: 14px; color: rgb(69, 69, 69); transform: scaleX(0.898);">4</div>
<div class="t" style="left: 360.5px; top: 217px; font-size: 11px; line-height: 14px; color: rgb(69, 69, 69); transform: scaleX(0.9548);">192.168.0.1</div>
<div class="t" style="left: 443.8px; top: 217px; font-size: 11px; line-height: 14px; color: rgb(69, 69, 69); transform: scaleX(0.9815);">Z4D-L09N-F02</div>
<div class="t" style="left: 528.4px; top: 217px; font-size: 11px; line-height: 14px; color: rgb(69, 69, 69); transform: scaleX(0.898);">1</div>
<div class="t" style="left: 570.5px; top: 217px; font-size: 11px; line-height: 14px; color: rgb(69, 69, 69); transform: scaleX(0.891);">P6</div>
<div class="t" style="left: 604px; top: 217px; font-size: 11px; line-height: 14px; color: rgb(69, 69, 69); transform: scaleX(0.9899);">Maintain Days</div>
<div class="t" style="left: 773px; top: 217px; font-size: 11px; line-height: 14px; color: rgb(69, 69, 69); transform: scaleX(1.1818);">---</div>
<div class="t" style="left: 857px; top: 217px; font-size: 11px; line-height: 14px; color: rgb(69, 69, 69); transform: scaleX(1.0141);">day</div>
<div class="t" style="left: 899px; top: 217px; font-size: 11px; line-height: 14px; color: rgb(69, 69, 69); transform: scaleX(0.9524);">符号付1...</div>
<div class="t" style="left: 957px; top: 217px; font-size: 11px; line-height: 14px; color: rgb(69, 69, 69); transform: scaleX(0.898);">0</div>
<div class="r" style="left:299px;top:234px;width:11px;height:11px;background:#fff;border:2px solid #808080"></div>
<svg class="r" style="left:299px;top:234px" width="11" height="11" viewBox="0 0 11 11"><path d="M2.6 5.6L4.6 7.8L8.6 2.8" fill="none" stroke="#000" stroke-width="1.9"></path></svg>
<div class="t" style="left: 327px; top: 233px; font-size: 11px; line-height: 14px; color: rgb(69, 69, 69); transform: scaleX(0.898);">5</div>
<div class="t" style="left: 360.5px; top: 233px; font-size: 11px; line-height: 14px; color: rgb(69, 69, 69); transform: scaleX(0.9548);">192.168.0.1</div>
<div class="t" style="left: 443.8px; top: 233px; font-size: 11px; line-height: 14px; color: rgb(69, 69, 69); transform: scaleX(0.9815);">Z4D-L09N-F02</div>
<div class="t" style="left: 528.4px; top: 233px; font-size: 11px; line-height: 14px; color: rgb(69, 69, 69); transform: scaleX(0.898);">1</div>
<div class="t" style="left: 570.5px; top: 233px; font-size: 11px; line-height: 14px; color: rgb(69, 69, 69); transform: scaleX(0.891);">P7</div>
<div class="t" style="left: 604px; top: 233px; font-size: 11px; line-height: 14px; color: rgb(69, 69, 69); transform: scaleX(0.9091);">スイッチング出力</div>
<div class="r" style="left:773px;top:235.5px;width:9.5px;height:9.5px;border:1.2px solid #555;border-radius:50%"></div>
<div class="t" style="left: 899px; top: 233px; font-size: 11px; line-height: 14px; color: rgb(69, 69, 69); transform: scaleX(0.9394);">ビット</div>
<div class="t" style="left: 957px; top: 233px; font-size: 11px; line-height: 14px; color: rgb(69, 69, 69); transform: scaleX(0.898);">0</div>
<div class="r" style="left:299px;top:250px;width:11px;height:11px;background:#fff;border:2px solid #808080"></div>
<div class="t" style="left: 327px; top: 249px; font-size: 11px; line-height: 14px; color: rgb(69, 69, 69); transform: scaleX(0.898);">6</div>
<div class="t" style="left: 360.5px; top: 249px; font-size: 11px; line-height: 14px; color: rgb(69, 69, 69); transform: scaleX(0.9548);">192.168.0.1</div>
<div class="t" style="left: 443.8px; top: 249px; font-size: 11px; line-height: 14px; color: rgb(69, 69, 69); transform: scaleX(0.9815);">Z4D-L09N-F02</div>
<div class="t" style="left: 528.4px; top: 249px; font-size: 11px; line-height: 14px; color: rgb(69, 69, 69); transform: scaleX(0.898);">1</div>
<div class="t" style="left: 570.5px; top: 249px; font-size: 11px; line-height: 14px; color: rgb(69, 69, 69); transform: scaleX(0.891);">P8</div>
<div class="t" style="left: 604px; top: 249px; font-size: 11px; line-height: 14px; color: rgb(69, 69, 69); transform: scaleX(0.9192);">プロセス入力データ</div>
<div class="t" style="left: 773px; top: 249px; font-size: 11px; line-height: 14px; color: rgb(69, 69, 69); transform: scaleX(0.9239);">00 F8</div>
<div class="t" style="left: 899px; top: 249px; font-size: 11px; line-height: 14px; color: rgb(69, 69, 69); transform: scaleX(0.9635);">16進数</div>
<div class="t" style="left: 957px; top: 249px; font-size: 11px; line-height: 14px; color: rgb(69, 69, 69); transform: scaleX(0.898);">0</div>
<div class="r" style="left:299px;top:266px;width:11px;height:11px;background:#fff;border:2px solid #808080"></div>
<div class="t" style="left: 327px; top: 265px; font-size: 11px; line-height: 14px; color: rgb(69, 69, 69); transform: scaleX(0.898);">7</div>
<div class="t" style="left: 360.5px; top: 265px; font-size: 11px; line-height: 14px; color: rgb(69, 69, 69); transform: scaleX(0.9548);">192.168.0.1</div>
<div class="t" style="left: 443.8px; top: 265px; font-size: 11px; line-height: 14px; color: rgb(69, 69, 69); transform: scaleX(0.9446);">UC2-IOL</div>
<div class="t" style="left: 528.4px; top: 265px; font-size: 11px; line-height: 14px; color: rgb(69, 69, 69); transform: scaleX(0.898);">2</div>
<div class="t" style="left: 570.5px; top: 265px; font-size: 11px; line-height: 14px; color: rgb(69, 69, 69); transform: scaleX(0.891);">P3</div>
<div class="t" style="left: 604px; top: 265px; font-size: 11px; line-height: 14px; color: rgb(69, 69, 69); transform: scaleX(0.9859);">A013 = アナログ値 13</div>
<div class="t" style="left: 773px; top: 265px; font-size: 11px; line-height: 14px; color: rgb(69, 69, 69); transform: scaleX(0.9796);">0</div>
<div class="t" style="left: 899px; top: 265px; font-size: 11px; line-height: 14px; color: rgb(69, 69, 69); transform: scaleX(0.9524);">符号付1...</div>
<div class="t" style="left: 957px; top: 265px; font-size: 11px; line-height: 14px; color: rgb(69, 69, 69); transform: scaleX(0.898);">3</div>
<div class="r" style="left:299px;top:282px;width:11px;height:11px;background:#fff;border:2px solid #808080"></div>
<div class="t" style="left: 327px; top: 281px; font-size: 11px; line-height: 14px; color: rgb(69, 69, 69); transform: scaleX(0.898);">8</div>
<div class="t" style="left: 360.5px; top: 281px; font-size: 11px; line-height: 14px; color: rgb(69, 69, 69); transform: scaleX(0.9548);">192.168.0.1</div>
<div class="t" style="left: 443.8px; top: 281px; font-size: 11px; line-height: 14px; color: rgb(69, 69, 69); transform: scaleX(0.9446);">UC2-IOL</div>
<div class="t" style="left: 528.4px; top: 281px; font-size: 11px; line-height: 14px; color: rgb(69, 69, 69); transform: scaleX(0.898);">2</div>
<div class="t" style="left: 570.5px; top: 281px; font-size: 11px; line-height: 14px; color: rgb(69, 69, 69); transform: scaleX(0.891);">P4</div>
<div class="t" style="left: 604px; top: 281px; font-size: 11px; line-height: 14px; color: rgb(69, 69, 69); transform: scaleX(0.9859);">A012 = アナログ値 12</div>
<div class="t" style="left: 773px; top: 281px; font-size: 11px; line-height: 14px; color: rgb(69, 69, 69); transform: scaleX(0.9796);">0</div>
<div class="t" style="left: 899px; top: 281px; font-size: 11px; line-height: 14px; color: rgb(69, 69, 69); transform: scaleX(0.9524);">符号付1...</div>
<div class="t" style="left: 957px; top: 281px; font-size: 11px; line-height: 14px; color: rgb(69, 69, 69); transform: scaleX(0.898);">4</div>
<div class="r" style="left:299px;top:298px;width:11px;height:11px;background:#fff;border:2px solid #808080"></div>
<div class="t" style="left: 327px; top: 297px; font-size: 11px; line-height: 14px; color: rgb(69, 69, 69); transform: scaleX(0.898);">9</div>
<div class="t" style="left: 360.5px; top: 297px; font-size: 11px; line-height: 14px; color: rgb(69, 69, 69); transform: scaleX(0.9548);">192.168.0.1</div>
<div class="t" style="left: 443.8px; top: 297px; font-size: 11px; line-height: 14px; color: rgb(69, 69, 69); transform: scaleX(0.9446);">UC2-IOL</div>
<div class="t" style="left: 528.4px; top: 297px; font-size: 11px; line-height: 14px; color: rgb(69, 69, 69); transform: scaleX(0.898);">2</div>
<div class="t" style="left: 570.5px; top: 297px; font-size: 11px; line-height: 14px; color: rgb(69, 69, 69); transform: scaleX(0.891);">P5</div>
<div class="t" style="left: 604px; top: 297px; font-size: 11px; line-height: 14px; color: rgb(69, 69, 69); transform: scaleX(1.001);">A011 = アナログ値 11</div>
<div class="t" style="left: 773px; top: 297px; font-size: 11px; line-height: 14px; color: rgb(69, 69, 69); transform: scaleX(0.9796);">0</div>
<div class="t" style="left: 899px; top: 297px; font-size: 11px; line-height: 14px; color: rgb(69, 69, 69); transform: scaleX(0.9524);">符号付1...</div>
<div class="t" style="left: 957px; top: 297px; font-size: 11px; line-height: 14px; color: rgb(69, 69, 69); transform: scaleX(0.898);">5</div>
<div class="r" style="left:299px;top:314px;width:11px;height:11px;background:#fff;border:2px solid #808080"></div>
<div class="t" style="left: 327px; top: 313px; font-size: 11px; line-height: 14px; color: rgb(69, 69, 69); transform: scaleX(0.898);">10</div>
<div class="t" style="left: 360.5px; top: 313px; font-size: 11px; line-height: 14px; color: rgb(69, 69, 69); transform: scaleX(0.9548);">192.168.0.1</div>
<div class="t" style="left: 443.8px; top: 313px; font-size: 11px; line-height: 14px; color: rgb(69, 69, 69); transform: scaleX(0.9446);">UC2-IOL</div>
<div class="t" style="left: 528.4px; top: 313px; font-size: 11px; line-height: 14px; color: rgb(69, 69, 69); transform: scaleX(0.898);">2</div>
<div class="t" style="left: 570.5px; top: 313px; font-size: 11px; line-height: 14px; color: rgb(69, 69, 69); transform: scaleX(0.891);">P6</div>
<div class="t" style="left: 604px; top: 313px; font-size: 11px; line-height: 14px; color: rgb(69, 69, 69); transform: scaleX(0.9859);">A010 = アナログ値 10</div>
<div class="t" style="left: 773px; top: 313px; font-size: 11px; line-height: 14px; color: rgb(69, 69, 69); transform: scaleX(0.9796);">0</div>
<div class="t" style="left: 899px; top: 313px; font-size: 11px; line-height: 14px; color: rgb(69, 69, 69); transform: scaleX(0.9524);">符号付1...</div>
<div class="t" style="left: 957px; top: 313px; font-size: 11px; line-height: 14px; color: rgb(69, 69, 69); transform: scaleX(0.898);">6</div>
<div class="r" style="left:299px;top:330px;width:11px;height:11px;background:#fff;border:2px solid #808080"></div>
<div class="t" style="left: 327px; top: 329px; font-size: 11px; line-height: 14px; color: rgb(69, 69, 69); transform: scaleX(0.9631);">11</div>
<div class="t" style="left: 360.5px; top: 329px; font-size: 11px; line-height: 14px; color: rgb(69, 69, 69); transform: scaleX(0.9548);">192.168.0.1</div>
<div class="t" style="left: 443.8px; top: 329px; font-size: 11px; line-height: 14px; color: rgb(69, 69, 69); transform: scaleX(0.9446);">UC2-IOL</div>
<div class="t" style="left: 528.4px; top: 329px; font-size: 11px; line-height: 14px; color: rgb(69, 69, 69); transform: scaleX(0.898);">2</div>
<div class="t" style="left: 570.5px; top: 329px; font-size: 11px; line-height: 14px; color: rgb(69, 69, 69); transform: scaleX(0.891);">P7</div>
<div class="t" style="left: 604px; top: 329px; font-size: 11px; line-height: 14px; color: rgb(69, 69, 69); transform: scaleX(1.0488);">A09 = アナログ値 9</div>
<div class="t" style="left: 773px; top: 329px; font-size: 11px; line-height: 14px; color: rgb(69, 69, 69); transform: scaleX(0.9796);">0</div>
<div class="t" style="left: 899px; top: 329px; font-size: 11px; line-height: 14px; color: rgb(69, 69, 69); transform: scaleX(0.9524);">符号付1...</div>
<div class="t" style="left: 957px; top: 329px; font-size: 11px; line-height: 14px; color: rgb(69, 69, 69); transform: scaleX(0.898);">7</div>
<div class="r" style="left:141px;top:336px;width:859px;height:319px;box-shadow:0 0 2px rgba(0,0,0,0.25),0 4px 18px rgba(0,0,0,0.22);border-radius:5px 0 0 0;background:#f0f0f0"></div>
<div class="r" style="left:141px;top:336px;width:859px;height:24px;background:#f8efef;border-radius:5px 0 0 0"></div>
<svg class="r" style="left:148.5px;top:340.5px" width="12" height="14" viewBox="0 0 13 16" preserveAspectRatio="none">
<path d="M1.2 0.8V5.2Q1.2 7 2.8 7Q4.4 7 4.4 5.2V0.8" fill="none" stroke="#a6b2b3" stroke-width="1.8"></path>
<path d="M7.6 7.2V1H10Q12 1 12 2.9Q12 4.6 10 4.6H7.6M9.8 4.6L12 7.2" fill="none" stroke="#a6b2b3" stroke-width="1.7"></path>
<path d="M5 8.2H1.2V14.8H5M1.2 11.5H4.6" fill="none" stroke="#a6b2b3" stroke-width="1.8"></path>
<path d="M7.3 8L12.3 14.8M12.3 8L7.3 14.8" fill="none" stroke="#e8101a" stroke-width="2.3"></path>
</svg>
<div class="t" style="left: 167px; top: 339.5px; font-size: 12px; line-height: 16px; color: rgb(26, 26, 26); transform: scaleX(0.5953);">モニタ チャート</div>
<div class="r" style="left:900px;top:348px;width:8px;height:1px;background:#222"></div>
<div class="r" style="left:938px;top:343px;width:9px;height:9px;border:1px solid #222;border-radius:1.5px"></div>
<svg class="r" style="left:977px;top:343px" width="10" height="10"><path d="M0.5 0.5L9.5 9.5M9.5 0.5L0.5 9.5" stroke="#222" stroke-width="1.05"></path></svg>
<div class="r" style="left:141px;top:361px;width:213px;height:21px;background:#fff;border-top:1px solid #a0a0a0;border-left:1px solid #a0a0a0;border-bottom:1px solid #fff;border-right:1px solid #fff;box-shadow:inset 1px 1px 0 #6e6e6e"></div>
<div class="r" style="left:358px;top:361px;width:28px;height:22px;background:#f0f0f0;border-top:1px solid #fff;border-left:1px solid #fff;border-right:1px solid #696969;border-bottom:1px solid #696969;box-shadow:inset -1px -1px 0 #a0a0a0"></div>
<div class="t" style="left: 367px; top: 366px; font-size: 12px; line-height: 16px; color: rgb(51, 51, 51); transform: scaleX(0.9984);">...</div>
<div class="r" style="left:392px;top:361px;width:95px;height:22px;background:#f0f0f0;border-top:1px solid #fff;border-left:1px solid #fff;border-right:1px solid #696969;border-bottom:1px solid #696969;box-shadow:inset -1px -1px 0 #a0a0a0"></div>
<div class="t" style="left: 409px; top: 363.5px; font-size: 12px; line-height: 16px; color: rgb(34, 34, 34); transform: scaleX(0.8392);">CSV保存開始</div>
<div class="r" style="left:493px;top:361px;width:93px;height:21px;background:#f0f0f0;border-top:1px solid #a0a0a0;border-left:1px solid #a0a0a0;border-bottom:1px solid #fff;border-right:1px solid #fff;box-shadow:inset 1px 1px 0 #6e6e6e"></div>
<div class="r" style="left:590px;top:361px;width:110px;height:22px;background:#f0f0f0;border-top:1px solid #fff;border-left:1px solid #fff;border-right:1px solid #696969;border-bottom:1px solid #696969;box-shadow:inset -1px -1px 0 #a0a0a0"></div>
<div class="t" style="left: 604.4px; top: 363px; font-size: 12px; line-height: 16px; color: rgb(34, 34, 34); transform: scaleX(0.8396);">現在データを保存</div>
<div class="r" style="left:704px;top:361px;width:94px;height:22px;background:#f0f0f0;border-top:1px solid #fff;border-left:1px solid #fff;border-right:1px solid #696969;border-bottom:1px solid #696969;box-shadow:inset -1px -1px 0 #a0a0a0"></div>
<div class="t" style="left: 730.4px; top: 363px; font-size: 12px; line-height: 16px; color: rgb(34, 34, 34); transform: scaleX(0.8667);">描画開始</div>
<div class="r" style="left:801px;top:360px;width:92px;height:23px;background:#fff;border-top:1px solid #a0a0a0;border-left:1px solid #a0a0a0;border-bottom:1px solid #fff;border-right:1px solid #fff;box-shadow:inset 1px 1px 0 #6e6e6e"></div>
<div class="t" style="left: 805.6px; top: 363.5px; font-size: 13px; line-height: 17px; color: rgb(34, 34, 34); transform: scaleX(0.9246);">20ms</div>
<div class="r" style="left:879px;top:361px;width:14px;height:21px;background:#f0f0f0;border-top:1px solid #fff;border-left:1px solid #fff;border-right:1px solid #696969;border-bottom:1px solid #696969;box-shadow:inset -1px -1px 0 #a0a0a0"></div>
<div class="r" style="left:882.5px;top:369.5px;width:0;height:0;border-left:3.5px solid transparent;border-right:3.5px solid transparent;border-top:4px solid #000"></div>
<div class="r" style="left:901px;top:366px;width:11px;height:11px;background:#fff;border-top:1px solid #7c7c7c;border-left:1px solid #7c7c7c;border-bottom:1px solid #f4f4f4;border-right:1px solid #f4f4f4;box-shadow:inset 1px 1px 0 #a8a8a8"></div>
<div class="t" style="left: 916px; top: 363px; font-size: 12px; line-height: 16px; color: rgb(34, 34, 34); transform: scaleX(0.8417);">時間軸表示</div>
<div class="clip" style="left:141px;top:388px;width:859px;height:267px;background:#000">
<div class="r" style="left:21px;top:0px;width:1px;height:267px;background:#454545"></div>
<div class="r" style="left:43px;top:0px;width:1px;height:267px;background:#454545"></div>
<div class="r" style="left:64px;top:0px;width:1px;height:267px;background:#454545"></div>
<div class="r" style="left:86px;top:0px;width:1px;height:267px;background:#454545"></div>
<div class="r" style="left:107px;top:0px;width:1px;height:267px;background:#454545"></div>
<div class="r" style="left:129px;top:0px;width:1px;height:267px;background:#454545"></div>
<div class="r" style="left:150px;top:0px;width:1px;height:267px;background:#454545"></div>
<div class="r" style="left:172px;top:0px;width:1px;height:267px;background:#454545"></div>
<div class="r" style="left:193px;top:0px;width:1px;height:267px;background:#454545"></div>
<div class="r" style="left:215px;top:0px;width:1px;height:267px;background:#454545"></div>
<div class="r" style="left:236px;top:0px;width:1px;height:267px;background:#454545"></div>
<div class="r" style="left:258px;top:0px;width:1px;height:267px;background:#454545"></div>
<div class="r" style="left:279px;top:0px;width:1px;height:267px;background:#454545"></div>
<div class="r" style="left:301px;top:0px;width:1px;height:267px;background:#454545"></div>
<div class="r" style="left:322px;top:0px;width:1px;height:267px;background:#454545"></div>
<div class="r" style="left:344px;top:0px;width:1px;height:267px;background:#454545"></div>
<div class="r" style="left:365px;top:0px;width:1px;height:267px;background:#454545"></div>
<div class="r" style="left:387px;top:0px;width:1px;height:267px;background:#454545"></div>
<div class="r" style="left:408px;top:0px;width:1px;height:267px;background:#454545"></div>
<div class="r" style="left:430px;top:0px;width:1px;height:267px;background:#454545"></div>
<div class="r" style="left:451px;top:0px;width:1px;height:267px;background:#454545"></div>
<div class="r" style="left:473px;top:0px;width:1px;height:267px;background:#454545"></div>
<div class="r" style="left:494px;top:0px;width:1px;height:267px;background:#454545"></div>
<div class="r" style="left:516px;top:0px;width:1px;height:267px;background:#454545"></div>
<div class="r" style="left:537px;top:0px;width:1px;height:267px;background:#454545"></div>
<div class="r" style="left:559px;top:0px;width:1px;height:267px;background:#454545"></div>
<div class="r" style="left:580px;top:0px;width:1px;height:267px;background:#454545"></div>
<div class="r" style="left:602px;top:0px;width:1px;height:267px;background:#454545"></div>
<div class="r" style="left:623px;top:0px;width:1px;height:267px;background:#454545"></div>
<div class="r" style="left:645px;top:0px;width:1px;height:267px;background:#454545"></div>
<div class="r" style="left:666px;top:0px;width:1px;height:267px;background:#454545"></div>
<div class="r" style="left:688px;top:0px;width:1px;height:267px;background:#454545"></div>
<div class="r" style="left:709px;top:0px;width:1px;height:267px;background:#454545"></div>
<div class="r" style="left:731px;top:0px;width:1px;height:267px;background:#454545"></div>
<div class="r" style="left:752px;top:0px;width:1px;height:267px;background:#454545"></div>
<div class="r" style="left:774px;top:0px;width:1px;height:267px;background:#454545"></div>
<div class="r" style="left:795px;top:0px;width:1px;height:267px;background:#454545"></div>
<div class="r" style="left:817px;top:0px;width:1px;height:267px;background:#454545"></div>
<div class="r" style="left:838px;top:0px;width:1px;height:267px;background:#454545"></div>
<div class="r" style="left:0px;top:37px;width:859px;height:1px;background:#454545"></div>
<div class="r" style="left:0px;top:76px;width:859px;height:1px;background:#454545"></div>
<div class="r" style="left:0px;top:113px;width:859px;height:1px;background:#454545"></div>
<div class="r" style="left:0px;top:151px;width:859px;height:1px;background:#8c8c8c"></div>
<div class="r" style="left:0px;top:166px;width:859px;height:1px;background:#454545"></div>
<div class="r" style="left:0px;top:182px;width:859px;height:1px;background:#8c8c8c"></div>
<div class="r" style="left:0px;top:220px;width:859px;height:1px;background:#454545"></div>
<div class="r" style="left:0px;top:257px;width:859px;height:1px;background:#454545"></div>
<div class="r" style="left:0px;top:0px;width:45px;height:13px;background:#000"></div>
<div class="r" style="left:0px;top:13px;width:169px;height:16px;background:#000"></div>
<div class="t" style="left: 4px; top: 0px; font-size: 12px; line-height: 16px; color: rgb(232, 224, 96); transform: scaleX(0.8758);">800.000</div>
<div class="t" style="left: 4px; top: 13px; font-size: 12px; line-height: 16px; color: rgb(232, 224, 96); transform: scaleX(0.8846);">平均化 received 点灯レベル 141 %</div>
<svg class="r" style="left:0;top:0" width="859" height="267"><polyline points="629.0,111.0 649.0,111.5 659.0,110.5 669.0,111.5 679.0,110.5 689.0,111.5 699.0,110.5 709.0,111.5 719.0,110.5 729.0,111.5 739.0,110.5 749.0,111.5 759.0,110.5 769.0,111.0 784.0,110.5 788.0,107.0 791.0,103.5 797.0,100.5 801.0,98.5 807.0,97.0 815.0,96.5 819.0,97.5 834.0,97.5 837.0,96.5 859.0,96.5" fill="none" stroke="#dede3c" stroke-width="1.1"></polyline><polyline points="629.0,159.5 786.0,159.5 790.0,174.3 857.0,174.3" fill="none" stroke="#e040e8" stroke-width="1.3"></polyline><polyline points="629.0,184.0 639.0,190.5 642.0,193.0 648.0,216.0 652.0,224.0 656.0,224.5 662.0,217.0 667.0,212.8 671.0,213.0 676.0,215.0 685.0,187.5 689.0,201.8 695.0,210.0 700.6,219.4 705.0,221.0 708.3,222.0 715.6,203.6 719.0,214.0 722.2,217.9 727.0,217.0 737.0,217.0 742.4,217.5 747.0,202.0 749.0,183.0 752.0,182.5 859.0,182.5" fill="none" stroke="#34c0c8" stroke-width="1.15"></polyline></svg>
</div>
<div class="r" style="left:5px;top:428px;width:776px;height:227px;box-shadow:0 0 3px rgba(0,0,0,0.3),0 4px 18px rgba(0,0,0,0.25);border-radius:6px 6px 0 0;background:#c1c6c8;border:1px solid #9a9a9a;border-bottom:none"></div>
<div class="r" style="left:6px;top:429px;width:774px;height:24px;background:#f8efef;border-radius:5px 5px 0 0"></div>
<svg class="r" style="left:13px;top:432.5px" width="11.5" height="14" viewBox="0 0 13 16" preserveAspectRatio="none">
<path d="M1.2 0.8V5.2Q1.2 7 2.8 7Q4.4 7 4.4 5.2V0.8" fill="none" stroke="#a6b2b3" stroke-width="1.8"></path>
<path d="M7.6 7.2V1H10Q12 1 12 2.9Q12 4.6 10 4.6H7.6M9.8 4.6L12 7.2" fill="none" stroke="#a6b2b3" stroke-width="1.7"></path>
<path d="M5 8.2H1.2V14.8H5M1.2 11.5H4.6" fill="none" stroke="#a6b2b3" stroke-width="1.8"></path>
<path d="M7.3 8L12.3 14.8M12.3 8L7.3 14.8" fill="none" stroke="#e8101a" stroke-width="2.3"></path>
</svg>
<div class="t" style="left: 30px; top: 433px; font-size: 12px; line-height: 16px; color: rgb(26, 26, 26); transform: scaleX(0.6893);">IODDの検索とダウンロード</div>
<div class="r" style="left:680px;top:441px;width:8px;height:1px;background:#c0c0c0"></div>
<div class="r" style="left:718px;top:436px;width:9px;height:9px;border:1px solid #222;border-radius:1.5px"></div>
<svg class="r" style="left:756px;top:436px" width="10" height="10"><path d="M0.5 0.5L9.5 9.5M9.5 0.5L0.5 9.5" stroke="#222" stroke-width="1.05"></path></svg>
<div class="t" style="left: 45px; top: 458px; font-size: 13px; line-height: 17px; color: rgb(51, 51, 51); transform: scaleX(0.7692);">ベンダー名</div>
<div class="r" style="left:101px;top:456px;width:136px;height:22px;background:#c1c6c8;border-top:1px solid #a0a0a0;border-left:1px solid #a0a0a0;border-bottom:1px solid #fff;border-right:1px solid #fff;box-shadow:inset 1px 1px 0 #6e6e6e"></div>
<div class="t" style="left: 105px; top: 459px; font-size: 11.5px; line-height: 15px; color: rgb(34, 34, 34); transform: scaleX(1.0327);">OPTEX FA CO.,LTD.</div>
<div class="r" style="left:216px;top:459px;width:1px;height:15px;background:#222"></div>
<div class="t" style="left: 44px; top: 483.5px; font-size: 13px; line-height: 17px; color: rgb(51, 51, 51); transform: scaleX(0.7692);">製品型式名</div>
<div class="r" style="left:101px;top:483px;width:136px;height:22px;background:#c1c6c8;border-top:1px solid #a0a0a0;border-left:1px solid #a0a0a0;border-bottom:1px solid #fff;border-right:1px solid #fff;box-shadow:inset 1px 1px 0 #6e6e6e"></div>
<div class="t" style="left: 288px; top: 459px; font-size: 12px; line-height: 16px; color: rgb(51, 51, 51); transform: scaleX(0.85);">最大検索数</div>
<div class="r" style="left:343px;top:456px;width:62px;height:22px;background:#c1c6c8;border-top:1px solid #a0a0a0;border-left:1px solid #a0a0a0;border-bottom:1px solid #fff;border-right:1px solid #fff;box-shadow:inset 1px 1px 0 #6e6e6e"></div>
<div class="t" style="left: 347px; top: 459px; font-size: 11.5px; line-height: 15px; color: rgb(34, 34, 34); transform: scaleX(1.1331);">1000</div>
<div class="r" style="left:390px;top:457px;width:14px;height:20px;background:#f0f0f0;border-top:1px solid #fff;border-left:1px solid #fff;border-right:1px solid #696969;border-bottom:1px solid #696969;box-shadow:inset -1px -1px 0 #a0a0a0"></div>
<div class="r" style="left:393.5px;top:465.0px;width:0;height:0;border-left:3.5px solid transparent;border-right:3.5px solid transparent;border-top:4px solid #000"></div>
<div class="t" style="left: 298px; top: 485px; font-size: 12px; line-height: 16px; color: rgb(51, 51, 51); transform: scaleX(0.8542);">検索個数</div>
<div class="r" style="left:343px;top:483px;width:62px;height:22px;background:#c1c6c8;border-top:1px solid #a0a0a0;border-left:1px solid #a0a0a0;border-bottom:1px solid #fff;border-right:1px solid #fff;box-shadow:inset 1px 1px 0 #6e6e6e"></div>
<div class="t" style="left: 346px; top: 484.5px; font-size: 11.5px; line-height: 15px; color: rgb(34, 34, 34); transform: scaleX(1.0945);">515</div>
<div class="r" style="left:414px;top:460px;width:213px;height:13px;background:#fafafa;border-top:1px solid #9a9a9a;border-left:1px solid #9a9a9a"></div>
<div class="r" style="left:416px;top:462px;width:209px;height:9px;background:#646464"></div>
<div class="r" style="left:635px;top:462px;width:11px;height:11px;background:#fff;border-top:1px solid #7c7c7c;border-left:1px solid #7c7c7c;border-bottom:1px solid #f4f4f4;border-right:1px solid #f4f4f4;box-shadow:inset 1px 1px 0 #a8a8a8"></div>
<div class="t" style="left: 650px; top: 458.4px; font-size: 12px; line-height: 16px; color: rgb(34, 34, 34); transform: scaleX(0.8474);">ZIPファイルを残す</div>
<div class="r" style="left:415px;top:480px;width:102px;height:27px;background:#f0f0f0;border-top:1px solid #fff;border-left:1px solid #fff;border-right:1px solid #696969;border-bottom:1px solid #696969;box-shadow:inset -1px -1px 0 #a0a0a0"></div>
<div class="t" style="left: 454.8px; top: 484.5px; font-size: 13px; line-height: 17px; color: rgb(34, 34, 34); transform: scaleX(0.8846);">検索</div>
<div class="r" style="left:523px;top:480px;width:103px;height:27px;background:#f0f0f0;border-top:1px solid #fff;border-left:1px solid #fff;border-right:1px solid #696969;border-bottom:1px solid #696969;box-shadow:inset -1px -1px 0 #a0a0a0"></div>
<div class="t" style="left: 538.8px; top: 484.5px; font-size: 13px; line-height: 17px; color: rgb(34, 34, 34); transform: scaleX(0.9103);">ベンダー一覧</div>
<div class="r" style="left:633px;top:480px;width:105px;height:27px;background:#f0f0f0;border-top:1px solid #fff;border-left:1px solid #fff;border-right:1px solid #696969;border-bottom:1px solid #696969;box-shadow:inset -1px -1px 0 #a0a0a0"></div>
<div class="t" style="left: 650.4px; top: 484.5px; font-size: 13px; line-height: 17px; color: rgb(34, 34, 34); transform: scaleX(0.9103);">ダウンロード</div>
<div class="r" style="left:8px;top:513px;width:769px;height:142px;background:#e6e6e6;border-top:1px solid #8c8c8c;border-left:1px solid #8c8c8c"></div>
<div class="r" style="left:9px;top:514px;width:752px;height:17px;background:#f0f0f0;border-bottom:1px solid #a0a0a0"></div>
<div class="r" style="left:9px;top:531px;width:752px;height:1px;background:#a8a8a8"></div>
<div class="r" style="left:33px;top:514px;width:1px;height:17px;background:#a8a8a8"></div>
<div class="r" style="left:67px;top:514px;width:1px;height:17px;background:#a8a8a8"></div>
<div class="r" style="left:235px;top:514px;width:1px;height:17px;background:#a8a8a8"></div>
<div class="r" style="left:362px;top:514px;width:1px;height:17px;background:#a8a8a8"></div>
<div class="r" style="left:614px;top:514px;width:1px;height:17px;background:#a8a8a8"></div>
<div class="r" style="left:674px;top:514px;width:1px;height:17px;background:#a8a8a8"></div>
<div class="r" style="left:733px;top:514px;width:1px;height:17px;background:#a8a8a8"></div>
<div class="clip" style="left:9px;top:514px;width:752px;height:141px">
<div class="t" style="left: 4.6px; top: 1px; font-size: 12px; line-height: 16px; color: rgb(51, 51, 51); transform: scaleX(1.0176);">追..</div>
<div class="t" style="left: 30.6px; top: 1px; font-size: 12px; line-height: 16px; color: rgb(51, 51, 51); transform: scaleX(0.8027);">No.</div>
<div class="t" style="left: 63.4px; top: 1px; font-size: 12px; line-height: 16px; color: rgb(51, 51, 51); transform: scaleX(0.8333);">ベンダー名</div>
<div class="t" style="left: 232.6px; top: 1px; font-size: 12px; line-height: 16px; color: rgb(51, 51, 51); transform: scaleX(0.85);">製品型式名</div>
<div class="t" style="left: 358.7px; top: 1px; font-size: 12px; line-height: 16px; color: rgb(51, 51, 51); transform: scaleX(0.8667);">IODDファイル名</div>
<div class="t" style="left: 611px; top: 1px; font-size: 12px; line-height: 16px; color: rgb(51, 51, 51); transform: scaleX(0.891);">ベンダ...</div>
<div class="t" style="left: 671px; top: 1px; font-size: 12px; line-height: 16px; color: rgb(51, 51, 51); transform: scaleX(0.8693);">デバイ...</div>
<div class="t" style="left: 729.7px; top: 1px; font-size: 12px; line-height: 16px; color: rgb(51, 51, 51); transform: scaleX(0.6667);">リビジョン</div>
<div class="r" style="left:0px;top:18px;width:752px;height:18px;background:#f0f0f0"></div>
<div class="r" style="left:3px;top:23px;width:11px;height:11px;background:#fff;border:2px solid #808080"></div>
<div class="t" style="left: 30.7px; top: 20.5px; font-size: 11px; line-height: 14px; color: rgb(51, 51, 51); transform: scaleX(0.9151);">208</div>
<div class="t" style="left: 64px; top: 20.5px; font-size: 11px; line-height: 14px; color: rgb(51, 51, 51); transform: scaleX(0.9521);">OPTEX FA CO.,LTD.</div>
<div class="t" style="left: 612px; top: 20.5px; font-size: 11px; line-height: 14px; color: rgb(51, 51, 51); transform: scaleX(0.9598);">1076</div>
<div class="r" style="left:3px;top:39px;width:11px;height:11px;background:#fff;border:2px solid #808080"></div>
<div class="t" style="left: 30.7px; top: 36.5px; font-size: 11px; line-height: 14px; color: rgb(51, 51, 51); transform: scaleX(0.9151);">209</div>
<div class="t" style="left: 64px; top: 36.5px; font-size: 11px; line-height: 14px; color: rgb(51, 51, 51); transform: scaleX(1.0059);">Hefei Onsoon Intelligent Elect...</div>
<div class="t" style="left: 612px; top: 36.5px; font-size: 11px; line-height: 14px; color: rgb(51, 51, 51); transform: scaleX(0.9598);">1084</div>
<div class="r" style="left:3px;top:55px;width:11px;height:11px;background:#fff;border:2px solid #808080"></div>
<div class="t" style="left: 30.7px; top: 52.5px; font-size: 11px; line-height: 14px; color: rgb(51, 51, 51); transform: scaleX(0.9151);">210</div>
<div class="t" style="left: 64px; top: 52.5px; font-size: 11px; line-height: 14px; color: rgb(51, 51, 51); transform: scaleX(0.9854);">IBS Japan Co., Ltd.</div>
<div class="t" style="left: 612px; top: 52.5px; font-size: 11px; line-height: 14px; color: rgb(51, 51, 51); transform: scaleX(0.9598);">1088</div>
<div class="r" style="left:3px;top:71px;width:11px;height:11px;background:#fff;border:2px solid #808080"></div>
<div class="t" style="left: 30.7px; top: 68.5px; font-size: 11px; line-height: 14px; color: rgb(51, 51, 51); transform: scaleX(0.9574);">211</div>
<div class="t" style="left: 64px; top: 68.5px; font-size: 11px; line-height: 14px; color: rgb(51, 51, 51); transform: scaleX(1.0156);">Kirchgaesser Industrieelektro...</div>
<div class="t" style="left: 612px; top: 68.5px; font-size: 11px; line-height: 14px; color: rgb(51, 51, 51); transform: scaleX(0.9598);">1089</div>
<div class="r" style="left:3px;top:87px;width:11px;height:11px;background:#fff;border:2px solid #808080"></div>
<div class="t" style="left: 30.7px; top: 84.5px; font-size: 11px; line-height: 14px; color: rgb(51, 51, 51); transform: scaleX(0.9151);">212</div>
<div class="t" style="left: 64px; top: 84.5px; font-size: 11px; line-height: 14px; color: rgb(51, 51, 51); transform: scaleX(0.9443);">HYDROTECHNIK GmbH</div>
<div class="t" style="left: 612px; top: 84.5px; font-size: 11px; line-height: 14px; color: rgb(51, 51, 51); transform: scaleX(0.9598);">1091</div>
<div class="r" style="left:3px;top:103px;width:11px;height:11px;background:#fff;border:2px solid #808080"></div>
<div class="t" style="left: 30.7px; top: 100.5px; font-size: 11px; line-height: 14px; color: rgb(51, 51, 51); transform: scaleX(0.9151);">213</div>
<div class="t" style="left: 64px; top: 100.5px; font-size: 11px; line-height: 14px; color: rgb(51, 51, 51); transform: scaleX(0.9594);">PULS GmbH</div>
<div class="t" style="left: 612px; top: 100.5px; font-size: 11px; line-height: 14px; color: rgb(51, 51, 51); transform: scaleX(0.9598);">1093</div>
<div class="r" style="left:3px;top:119px;width:11px;height:11px;background:#fff;border:2px solid #808080"></div>
<div class="t" style="left: 30.7px; top: 116.5px; font-size: 11px; line-height: 14px; color: rgb(51, 51, 51); transform: scaleX(0.9151);">214</div>
<div class="t" style="left: 64px; top: 116.5px; font-size: 11px; line-height: 14px; color: rgb(51, 51, 51); transform: scaleX(0.9639);">SMW-AUTOBLOK Spannsyste...</div>
<div class="t" style="left: 612px; top: 116.5px; font-size: 11px; line-height: 14px; color: rgb(51, 51, 51); transform: scaleX(0.9598);">1094</div>
<div class="r" style="left:3px;top:135px;width:11px;height:11px;background:#fff;border:2px solid #808080"></div>
<div class="t" style="left: 30.7px; top: 132.5px; font-size: 11px; line-height: 14px; color: rgb(51, 51, 51); transform: scaleX(0.9151);">215</div>
<div class="t" style="left: 64px; top: 132.5px; font-size: 11px; line-height: 14px; color: rgb(51, 51, 51); transform: scaleX(0.9543);">KUNBUS GmbH</div>
<div class="t" style="left: 612px; top: 132.5px; font-size: 11px; line-height: 14px; color: rgb(51, 51, 51); transform: scaleX(0.9598);">1095</div>
</div>
<div class="r" style="left:761px;top:514px;width:16px;height:141px;background:#f0f0f0"></div>
<div class="r" style="left:770px;top:613px;width:1px;height:16px;background:#707070"></div>
</body></html>
